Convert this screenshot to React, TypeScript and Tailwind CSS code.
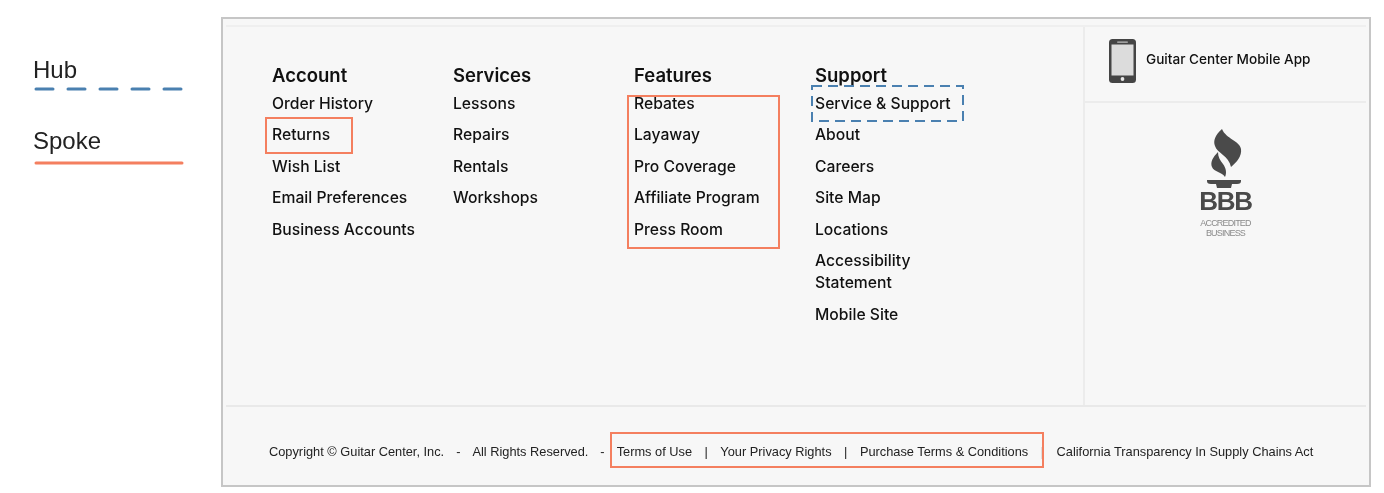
import React from "react";

const columns = [
  { title: "Account", links: ["Order History", "Returns", "Wish List", "Email Preferences", "Business Accounts"] },
  { title: "Services", links: ["Lessons", "Repairs", "Rentals", "Workshops"] },
  { title: "Features", links: ["Rebates", "Layaway", "Pro Coverage", "Affiliate Program", "Press Room"] },
  {
    title: "Support",
    links: ["Service & Support", "About", "Careers", "Site Map", "Locations", "Accessibility Statement", "Mobile Site"],
  },
];

const HubBox = () => (
  <svg className="absolute left-[-4px] top-[-8px]" width="153" height="37" fill="none">
    <rect x="1" y="1" width="151" height="35" stroke="#4a80b0" strokeWidth="2" strokeDasharray="10 6" />
  </svg>
);

const SpokeBox = ({ className }: { className: string }) => (
  <div className={`absolute border-2 border-[#f47f5f] ${className}`} />
);

const PhoneIcon = () => (
  <svg width="27" height="44" viewBox="0 0 27 44">
    <rect x="0" y="0" width="27" height="44" rx="3.5" fill="#454545" />
    <rect x="2.5" y="5.5" width="22" height="31" fill="#dcdcdc" />
    <rect x="8" y="2.4" width="11" height="1.4" rx="0.7" fill="#bdbdbd" />
    <circle cx="13.5" cy="40" r="1.9" fill="#e8e8e8" />
  </svg>
);

const BbbLogo = () => (
  <div className="flex flex-col items-center font-['Liberation_Sans',sans-serif] text-[#4a4a4a]">
    <svg width="36" height="60" viewBox="0 0 36 60" fill="#4a4a4a">
      <path d="M15 0C8 6 6 12 8 17c2 7 14 10 16 21 6-5 11-11 10-18C33 12 19 10 15 0z" />
      <path d="M11 23C6 28 3 33 5 38c2 5 10 5 13 10 2-4 1-9-2-13-3-4-5-7-5-12z" />
      <path d="M0 51h34v1c0 2-1 3-4 3h-5l-1 4H10l-1-4H4c-3 0-4-1-4-3z" />
    </svg>
    <span className="text-[26px] leading-[24px] font-bold tracking-[-1.2px]">BBB</span>
    <span className="mt-[5px] text-[9px] leading-[10px] tracking-[-0.8px] text-[#8a8a8a]">ACCREDITED</span>
    <span className="text-[9px] leading-[10px] tracking-[-0.8px] text-[#8a8a8a]">BUSINESS</span>
  </div>
);

const App = () => {
  return (
    <div className="flex h-[493px] w-[1384px] overflow-hidden bg-white pt-[17px] font-['Liberation_Sans',sans-serif] text-black blur-[0.5px]">
      <div className="w-[221px] flex-none pl-[33px] pt-[38px]">
        <div className="text-[24px] leading-[30px] text-[#222]">Hub</div>
        <svg className="mt-[2px] ml-[1px] block" width="150" height="4">
          <line x1="2" y1="2" x2="148" y2="2" stroke="#4a80b0" strokeWidth="3" strokeLinecap="round" strokeDasharray="17 15" />
        </svg>
        <div className="mt-[35px] text-[24px] leading-[30px] text-[#222]">Spoke</div>
        <svg className="mt-[5px] ml-[1px] block" width="150" height="4">
          <line x1="2" y1="2" x2="148" y2="2" stroke="#f47f5f" strokeWidth="3" strokeLinecap="round" />
        </svg>
      </div>

      <div className="flex h-[470px] w-[1150px] flex-none flex-col border-2 border-[#c6c6c6] bg-[#f7f7f7]">
        <div className="mx-[3px] mt-[6px] flex h-[382px] flex-none border-y-2 border-t-[#efefef] border-b-[#e9e9e9]">
          <div className="flex flex-1 pl-[46px] pt-[36px] font-['Inter',sans-serif] text-[15.7px] font-medium text-[#111]">
            {columns.map((col) => (
              <div key={col.title} className="w-[181px] flex-none">
                <div className="h-[30px] text-[18.5px] leading-[24px] font-semibold">{col.title}</div>
                <ul className="relative flex max-w-[145px] flex-col gap-[9px]">
                  {col.title === "Features" && <SpokeBox className="left-[-7px] top-[2px] h-[154px] w-[153px]" />}
                  {col.links.map((link) => (
                    <li key={link} className="relative leading-[22.4px]">
                      {link === "Returns" && <SpokeBox className="left-[-7px] top-[-7px] h-[37px] w-[88px]" />}
                      {link === "Service & Support" && <HubBox />}
                      <span className="whitespace-nowrap">{link === "Accessibility Statement" ? "Accessibility" : link}</span>
                      {link === "Accessibility Statement" && <span className="block">Statement</span>}
                    </li>
                  ))}
                </ul>
              </div>
            ))}
          </div>
          <div className="w-[283px] flex-none border-l-2 border-[#ececec]">
            <div className="flex h-[76px] items-start gap-[10px] border-b-2 border-[#ececec] pl-[24px] pt-[12px]">
              <PhoneIcon />
              <span className="mt-[11px] font-['Inter',sans-serif] text-[13.6px] leading-[18px] font-medium text-[#111]">
                Guitar Center Mobile App
              </span>
            </div>
            <div className="flex justify-center pt-[26px]">
              <BbbLogo />
            </div>
          </div>
        </div>

        <div className="flex flex-1 items-center pl-[46px] pt-[12px] text-[12.8px] leading-[36px] text-[#222]">
          <span>Copyright © Guitar Center, Inc.</span>
          <span className="ml-[12px]">-</span>
          <span className="ml-[12px]">All Rights Reserved.</span>
          <span className="ml-[12px]">-</span>
          <div className="relative ml-[12px] flex">
            <SpokeBox className="left-[-7px] top-[-2px] h-[36px] w-[434px]" />
            <span>Terms of Use</span>
            <span className="ml-[12.5px]">|</span>
            <span className="ml-[12.5px]">Your Privacy Rights</span>
            <span className="ml-[12.5px]">|</span>
            <span className="ml-[12.5px]">Purchase Terms &amp; Conditions</span>
            <span className="ml-[12.5px]">|</span>
            <span className="ml-[12.5px]">California Transparency In Supply Chains Act</span>
          </div>
        </div>
      </div>
    </div>
  );
};

export default App;
